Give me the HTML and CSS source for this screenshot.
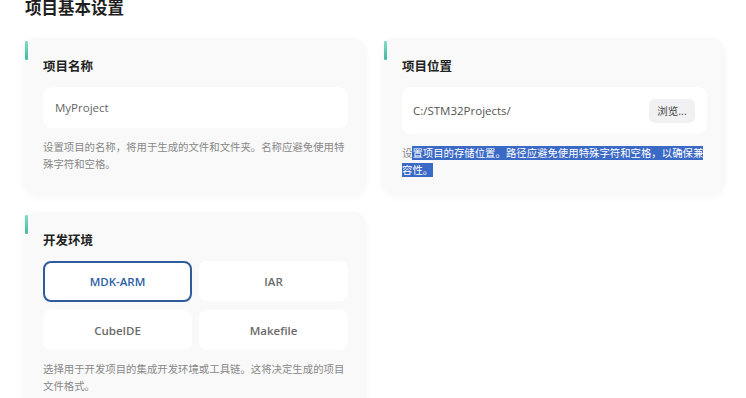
FILE: index.html
```html
<!DOCTYPE html>
<html>
<head>
<meta charset="utf-8">
<meta name="viewport" content="width=device-width, initial-scale=1.0">
<link rel="stylesheet" href="styles.css">
</head>
<body>

<div class="page">
  <h1 class="page-title">项目基本设置</h1>

  <div class="cards">
    <div class="card">
      <div class="card-title">项目名称</div>
      <div class="field">MyProject</div>
      <p class="hint">设置项目的名称，将用于生成的文件和文件夹。名称应避免使用特殊字符和空格。</p>
    </div>

    <div class="card">
      <div class="card-title">项目位置</div>
      <div class="field field-path">
        <span>C:/STM32Projects/</span>
        <button class="browse">浏览...</button>
      </div>
      <p class="hint">设<span class="sel">置项目的存储位置。路径应避免使用特殊字符和空格，以确保兼容性。</span></p>
    </div>

    <div class="card">
      <div class="card-title">开发环境</div>
      <div class="options">
        <div class="option active">MDK-ARM</div>
        <div class="option">IAR</div>
        <div class="option">CubeIDE</div>
        <div class="option">Makefile</div>
      </div>
      <p class="hint">选择用于开发项目的集成开发环境或工具链。这将决定生成的项目文件格式。</p>
    </div>
  </div>
</div>

</body>
</html>
```

FILE: styles.css
```css
* {box-sizing: border-box;}

body {
  margin: 0;
  background: #fff;
  font-family: "Open Sans", "Noto Sans CJK SC", sans-serif;
  color: #222;
}

.page {
  padding: 0 21px 0 23px;
}

.page-title {
  font-size: 16.5px;
  line-height: 20px;
  font-weight: 700;
  margin: -2px 0 0 2px;
  color: #1f1f1f;
}

.cards {
  display: grid;
  grid-template-columns: 1fr 1fr;
  column-gap: 16px;
  row-gap: 17px;
  margin-top: 20px;
}

.card {
  position: relative;
  background: #f9f9f9;
  border-radius: 14px;
  padding: 20px 18px 16px 20px;
  box-shadow: 0 2px 8px rgba(0, 0, 0, 0.035);
}

/* small accent in the corner */
.card::before {
  content: "";
  position: absolute;
  left: 2px;
  top: 3px;
  width: 3px;
  height: 19px;
  border-radius: 2px 2px 3px 3px;
  background: linear-gradient(#86dcc6, #3eb99c);
}

.card-title {
  font-size: 12.5px;
  line-height: 18px;
  font-weight: 700;
  color: #222;
  margin-bottom: 11px;
}

.field {
  background: #fff;
  border-radius: 9px;
  height: 41px;
  padding: 0 12px;
  display: flex;
  align-items: center;
  font-size: 11.5px;
  color: #666;
}

.field-path {
  height: 47px;
  justify-content: space-between;
  padding: 0 12px 0 11px;
  color: #555;
}

.browse {
  border: none;
  background: #f1f1f3;
  border-radius: 6px;
  width: 46px;
  height: 24px;
  padding: 0;
  font-family: "Open Sans", "Noto Sans CJK SC", sans-serif;
  font-size: 10.5px;
  color: #444;
}

.hint {
  margin: 11px 0 0;
  font-size: 10.4px;
  line-height: 17px;
  color: #888;
}

.sel {
  background: #3b69c6;
  color: #fff;
}

.options {
  display: grid;
  grid-template-columns: 1fr 1fr;
  gap: 8px 7px;
}

.option {
  height: 40px;
  background: #fff;
  border-radius: 8px;
  border: 2px solid transparent;
  display: flex;
  align-items: center;
  justify-content: center;
  font-size: 11.5px;
  font-weight: 600;
  color: #6a6a6a;
}

.option.active {
  border-color: #2e5c9a;
  color: #2c5ea6;
  height: 41px;
}
```
